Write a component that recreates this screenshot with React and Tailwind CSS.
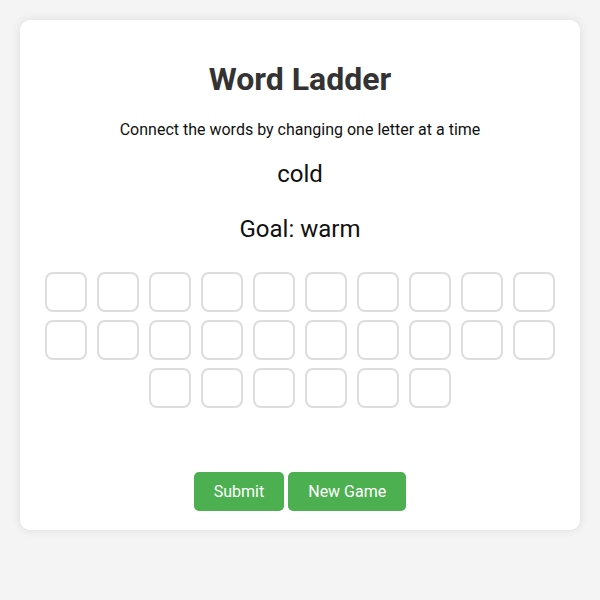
import React, { useState } from 'react';

function App() {
  const [start] = useState('cold');
  const [goal] = useState('warm');
  const [cells, setCells] = useState(Array(26).fill(''));

  const handleChange = (i, v) => {
    const next = [...cells];
    next[i] = v.slice(-1);
    setCells(next);
  };

  return (
    <div className="min-h-screen bg-[#f4f4f4] p-5 font-['Roboto',sans-serif]">
      <div className="bg-white rounded-[10px] shadow-[0_0_10px_rgba(0,0,0,0.1)] p-5 pb-[19px] text-center">
        {/* Title */}
        <h1 className="mt-[21px] mb-[21px] text-[32px] leading-[37.5px] font-bold text-[#333]">Word Ladder</h1>
        <p className="text-[16px] leading-[19px] text-[#111]">Connect the words by changing one letter at a time</p>

        {/* Start and goal words */}
        <div className="mt-[21px] text-[24px] leading-[28px] text-[#111]">{start}</div>
        <div className="mt-[27px] text-[24px] leading-[28px] text-[#111]">Goal: {goal}</div>

        {/* Letter grid */}
        <div className="mt-[29px] flex flex-wrap justify-center gap-x-[10px] gap-y-[8px]">
          {cells.map((c, i) => (
            <input
              key={i}
              type="text"
              value={c}
              onChange={(e) => handleChange(i, e.target.value)}
              className="w-[42px] h-[40px] border-2 border-[#ddd] rounded-[8px] text-center text-[20px] outline-none"
            />
          ))}
        </div>

        {/* Buttons */}
        <div className="mt-[64px] flex justify-center gap-1">
          <button className="bg-[#4caf50] text-white text-[16px] leading-[19px] px-5 py-[10px] rounded-[5px]">Submit</button>
          <button className="bg-[#4caf50] text-white text-[16px] leading-[19px] px-5 py-[10px] rounded-[5px]">New Game</button>
        </div>
      </div>
    </div>
  );
}

export default App;
